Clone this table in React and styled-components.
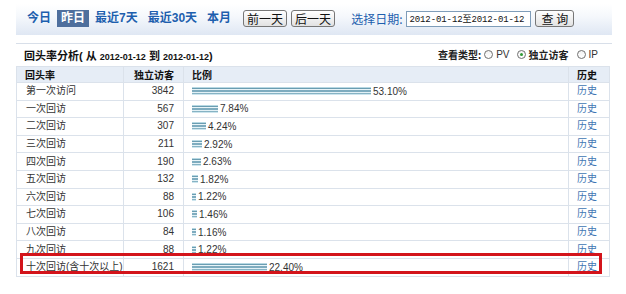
import React from "react";
import styled, { createGlobalStyle } from "styled-components";

const Global = createGlobalStyle`
  html, body { margin: 0; padding: 0; background: #fff; }
  body { font-family: "Liberation Sans", "Noto Sans CJK SC", sans-serif; color: #333; }
  * { box-sizing: border-box; }
`;

const Page = styled.div`
  width: 626px;
  padding: 4px 14px 0 16px;
`;

const TopBar = styled.div`
  display: flex;
  align-items: center;
  gap: 2px;
  height: 31px;
  padding: 0 0 2px 7px;
  background: linear-gradient(to bottom, #ffffff 0%, #f5f8fc 40%, #dfe7f3 100%);
`;

const RangeLink = styled.span`
  font: bold 12px "Liberation Sans", "Noto Sans CJK SC", sans-serif;
  height: 17px;
  line-height: 17px;
  padding: 0 4px;
  color: ${(p) => (p.$active ? "#fff" : "#1d5fae")};
  background: ${(p) => (p.$active ? "#4f6f9d" : "transparent")};
  white-space: nowrap;
`;

const BarButton = styled.button`
  font: 12px "Noto Sans CJK SC", sans-serif;
  color: #111;
  height: 17px;
  line-height: 15px;
  padding: 0 ${(p) => p.$pad || 3}px;
  margin: 0 0 0 ${(p) => p.$ml || 0}px;
  border: 1px solid #777;
  border-radius: 3px;
  background: linear-gradient(to bottom, #ffffff, #e2e2e2);
  white-space: pre;
`;

const DateLabel = styled.span`
  font: 12px "Noto Sans CJK SC", sans-serif;
  color: #1d5fae;
  margin-left: 14px;
  white-space: nowrap;
`;

const DateInput = styled.input`
  width: 125px;
  height: 16px;
  margin-left: 2px;
  padding: 0 2px;
  border: 1px solid #7f9db9;
  font: 9px "Liberation Mono", "Noto Sans CJK SC", monospace;
  letter-spacing: -0.1px;
  color: #111;
  outline: none;
`;

const Panel = styled.div`
  margin-top: 8px;
  border-top: 1px solid #d8dfe9;
`;

const PanelHead = styled.div`
  display: flex;
  align-items: center;
  justify-content: space-between;
  height: 22px;
  padding: 0 14px 1px 8px;
`;

const Title = styled.div`
  font: bold 11px "Liberation Sans", "Noto Sans CJK SC", sans-serif;
  color: #111;
  white-space: pre;
`;

const TitleDate = styled.span`
  font-size: 9px;
`;

const TypeSwitch = styled.div`
  display: flex;
  align-items: center;
  font: bold 10px "Noto Sans CJK SC", sans-serif;
  color: #222;
`;

const Radio = styled.span`
  display: inline-flex;
  align-items: center;
  justify-content: center;
  width: 9px;
  height: 9px;
  border-radius: 50%;
  border: 1px solid #707070;
  background: linear-gradient(to bottom, #f2f2f2, #ffffff);
  margin: 0 3px 0 ${(p) => p.$ml || 0}px;
  &::after {
    content: "";
    width: 3px;
    height: 3px;
    border-radius: 50%;
    background: ${(p) => (p.$checked ? "#2f9a35" : "transparent")};
  }
`;

const Latin = styled.span`
  font: 10px "Liberation Sans", sans-serif;
  font-weight: normal;
  color: #333;
`;

const TableWrap = styled.div`
  position: relative;
  width: 593px;
`;

const Table = styled.table`
  width: 593px;
  border-collapse: collapse;
  table-layout: fixed;
  border: 1px solid #dbe2eb;
`;

const HeadRow = styled.tr`
  height: 16px;
  background: #e6edf6;
`;

const Th = styled.th`
  font: bold 10px "Noto Sans CJK SC", sans-serif;
  color: #111;
  padding: 0 ${(p) => p.$pr || 0}px 0 ${(p) => p.$pl || 0}px;
  text-align: ${(p) => p.$align || "left"};
  border: 1px solid #dbe2eb;
  line-height: 14px;
`;

const Row = styled.tr`
  height: 17.6px;
`;

const Td = styled.td`
  font: 10px "Liberation Sans", "Noto Sans CJK SC", sans-serif;
  color: ${(p) => p.$color || "#333"};
  padding: 0 ${(p) => p.$pr || 0}px 0 ${(p) => p.$pl || 0}px;
  text-align: ${(p) => p.$align || "left"};
  border: 1px solid #dbe2eb;
  white-space: nowrap;
  line-height: 14px;
`;

const BarCell = styled.div`
  display: flex;
  align-items: center;
  gap: 2px;
  font: 10px "Liberation Sans", sans-serif;
  color: #333;
`;

const Bar = styled.span`
  display: block;
  height: 8px;
  flex: none;
  background: linear-gradient(
    to bottom,
    #b7d8e3 0px,
    #b7d8e3 1px,
    #6a9db1 1px,
    #6a9db1 2px,
    #e8f4f8 2px,
    #e8f4f8 3px,
    #7eacbf 3px,
    #7eacbf 5px,
    #e3f1f6 5px,
    #e3f1f6 6px,
    #86b3c4 6px,
    #86b3c4 7px,
    #cde5ee 7px,
    #cde5ee 8px
  );
`;

const Highlight = styled.div`
  position: absolute;
  top: 187px;
  left: 4px;
  width: 582px;
  height: 21px;
  border: 3px solid #d3141b;
  pointer-events: none;
`;

const rows = [
  ["第一次访问", 3842, "53.10"],
  ["一次回访", 567, "7.84"],
  ["二次回访", 307, "4.24"],
  ["三次回访", 211, "2.92"],
  ["四次回访", 190, "2.63"],
  ["五次回访", 132, "1.82"],
  ["六次回访", 88, "1.22"],
  ["七次回访", 106, "1.46"],
  ["八次回访", 84, "1.16"],
  ["九次回访", 88, "1.22"],
  ["十次回访(含十次以上)", 1621, "22.40"],
];

const FULL = 337;

export default function App() {
  return (
    <>
      <Global />
      <Page>
        <TopBar>
          <RangeLink>今日</RangeLink>
          <RangeLink $active>昨日</RangeLink>
          <RangeLink>最近7天</RangeLink>
          <RangeLink>最近30天</RangeLink>
          <RangeLink>本月</RangeLink>
          <BarButton $ml={6}>前一天</BarButton>
          <BarButton $ml={2}>后一天</BarButton>
          <DateLabel>选择日期:</DateLabel>
          <DateInput readOnly value="2012-01-12至2012-01-12" />
          <BarButton $ml={2} $pad={5}>查 询</BarButton>
        </TopBar>
        <Panel>
          <PanelHead>
            <Title>
              回头率分析( 从 <TitleDate>2012-01-12</TitleDate> 到{" "}
              <TitleDate>2012-01-12</TitleDate>)
            </Title>
            <TypeSwitch>
              <span>查看类型:</span>
              <Radio $ml={3} />
              <Latin>PV</Latin>
              <Radio $ml={7} $checked />
              <span>独立访客</span>
              <Radio $ml={8} />
              <Latin>IP</Latin>
            </TypeSwitch>
          </PanelHead>
          <TableWrap>
            <Table>
              <colgroup>
                <col style={{ width: 107 }} />
                <col style={{ width: 60 }} />
                <col style={{ width: 385 }} />
                <col style={{ width: 41 }} />
              </colgroup>
              <thead>
                <HeadRow>
                  <Th $pl={8}>回头率</Th>
                  <Th $align="right" $pr={9}>独立访客</Th>
                  <Th $pl={8}>比例</Th>
                  <Th $pl={8}>历史</Th>
                </HeadRow>
              </thead>
              <tbody>
                {rows.map(([name, count, pct]) => (
                  <Row key={name}>
                    <Td $pl={9}>{name}</Td>
                    <Td $align="right" $pr={9}>{count}</Td>
                    <Td $pl={8}>
                      <BarCell>
                        <Bar style={{ width: Math.round((parseFloat(pct) / 100) * FULL) }} />
                        <span>{pct}%</span>
                      </BarCell>
                    </Td>
                    <Td $pl={8} $color="#3f76b3">历史</Td>
                  </Row>
                ))}
              </tbody>
            </Table>
            <Highlight />
          </TableWrap>
        </Panel>
      </Page>
    </>
  );
}
